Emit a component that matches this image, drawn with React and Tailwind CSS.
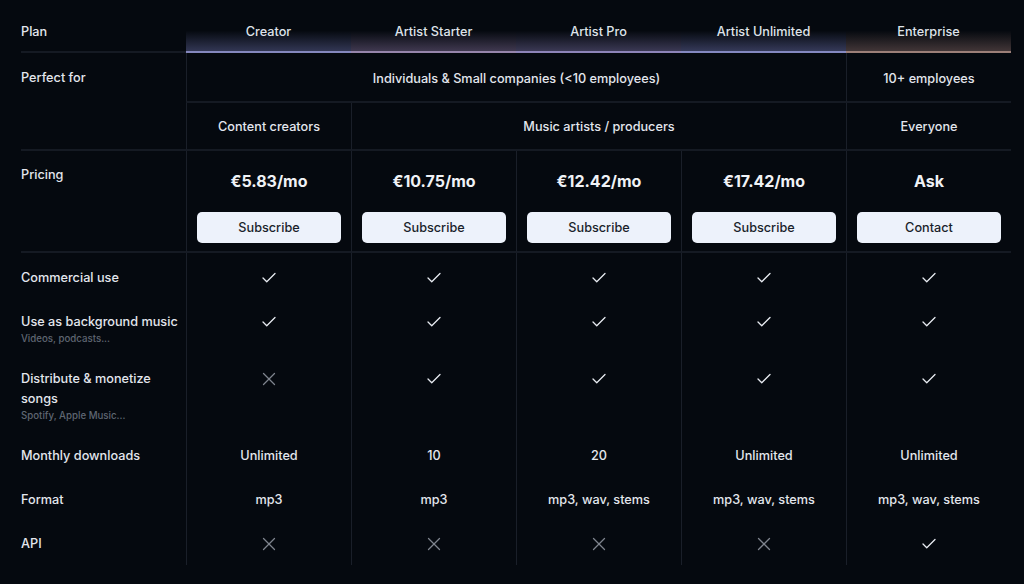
import { Check, X } from 'lucide-react';

const plans = [
  { name: 'Creator', strip: 'to-[#5f6498]/50', line: 'border-[#8487bd]' },
  { name: 'Artist Starter', strip: 'to-[#7a6890]/50', line: 'border-[#9685ab]' },
  { name: 'Artist Pro', strip: 'to-[#706899]/50', line: 'border-[#8d84b8]' },
  { name: 'Artist Unlimited', strip: 'to-[#656aa2]/50', line: 'border-[#8488c0]' },
  { name: 'Enterprise', strip: 'to-[#7e625f]/50', line: 'border-[#9c7f78]' },
];

const prices = [
  { price: '€5.83/mo', cta: 'Subscribe' },
  { price: '€10.75/mo', cta: 'Subscribe' },
  { price: '€12.42/mo', cta: 'Subscribe' },
  { price: '€17.42/mo', cta: 'Subscribe' },
  { price: 'Ask', cta: 'Contact' },
];

const features = [
  { label: 'Commercial use', values: [true, true, true, true, true] },
  { label: 'Use as background music', sub: 'Videos, podcasts...', values: [true, true, true, true, true] },
  { label: 'Distribute & monetize songs', sub: 'Spotify, Apple Music...', values: [false, true, true, true, true] },
  { label: 'Monthly downloads', values: ['Unlimited', '10', '20', 'Unlimited', 'Unlimited'] },
  { label: 'Format', values: ['mp3', 'mp3', 'mp3, wav, stems', 'mp3, wav, stems', 'mp3, wav, stems'] },
  { label: 'API', values: [false, false, false, false, true] },
];

const Value = ({ value }) => {
  if (value === true) return <Check size={18} strokeWidth={1.75} className="text-[#e8ebf1]" />;
  if (value === false) return <X size={22} strokeWidth={1.4} className="text-[#7f848e]" />;
  return <span className="leading-5">{value}</span>;
};

export default function App() {
  return (
    <div className="min-h-screen bg-[#05090f] pl-[21px] font-['Inter',sans-serif] text-[12.7px] font-medium text-[#e3e6ed]">
      <div className="grid w-[990px] grid-cols-[165px_repeat(5,165px)]">
        {/* Header */}
        <div className="h-[53px] border-b-2 border-[#151a23] pt-[24px] leading-4">Plan</div>
        {plans.map((p) => (
          <div
            key={p.name}
            className={`flex h-[53px] justify-center border-b-2 bg-linear-to-b from-transparent from-60% ${p.strip} ${p.line} pt-[24px] leading-4 text-[#dfe3ea]`}
          >
            {p.name}
          </div>
        ))}

        {/* Perfect for */}
        <div className="row-span-2 border-b-2 border-[#151a23] pt-[17px] leading-4">Perfect for</div>
        <div className="col-span-4 flex h-[50px] items-center justify-center border-b-2 border-l border-[#151a23] border-l-[#1a1f29] pt-[3px]">
          Individuals &amp; Small companies (&lt;10 employees)
        </div>
        <div className="flex h-[50px] items-center justify-center border-b-2 border-l border-[#151a23] border-l-[#1a1f29] pt-[3px]">
          10+ employees
        </div>
        <div className="flex h-[48px] items-center justify-center border-b-2 border-l border-[#151a23] border-l-[#1a1f29] pt-[2px]">
          Content creators
        </div>
        <div className="col-span-3 flex h-[48px] items-center justify-center border-b-2 border-l border-[#151a23] border-l-[#1a1f29] pt-[2px]">
          Music artists / producers
        </div>
        <div className="flex h-[48px] items-center justify-center border-b-2 border-l border-[#151a23] border-l-[#1a1f29] pt-[2px]">
          Everyone
        </div>

        {/* Pricing */}
        <div className="border-b-2 border-[#151a23] pt-4 leading-4">Pricing</div>
        {prices.map((p, i) => (
          <div
            key={i}
            className="flex h-[102px] flex-col items-center border-b-2 border-l border-[#151a23] border-l-[#1a1f29] px-[10px] pt-[18px]"
          >
            <div className="text-[16px] font-bold leading-6 text-[#f0f2f6]">{p.price}</div>
            <button className="mt-[19px] h-[31px] w-full rounded-[5px] bg-[#edf2fb] text-[12.7px] font-medium text-[#1a1f2b]">
              {p.cta}
            </button>
          </div>
        ))}

        {/* Features */}
        {features.map((f, r) => (
          <div key={f.label} className="contents">
            <div className={`pt-[15px] ${r === features.length - 1 ? 'pb-[11px]' : 'pb-[9px]'}`}>
              <div className="leading-5">{f.label}</div>
              {f.sub && <div className="text-[9.7px] leading-[13px] text-[#5f6672]">{f.sub}</div>}
            </div>
            {f.values.map((v, i) => (
              <div key={i} className="flex justify-center border-l border-[#1a1f29] pt-[15px]">
                <div className="flex h-5 items-center">
                  <Value value={v} />
                </div>
              </div>
            ))}
          </div>
        ))}
      </div>
    </div>
  );
}
